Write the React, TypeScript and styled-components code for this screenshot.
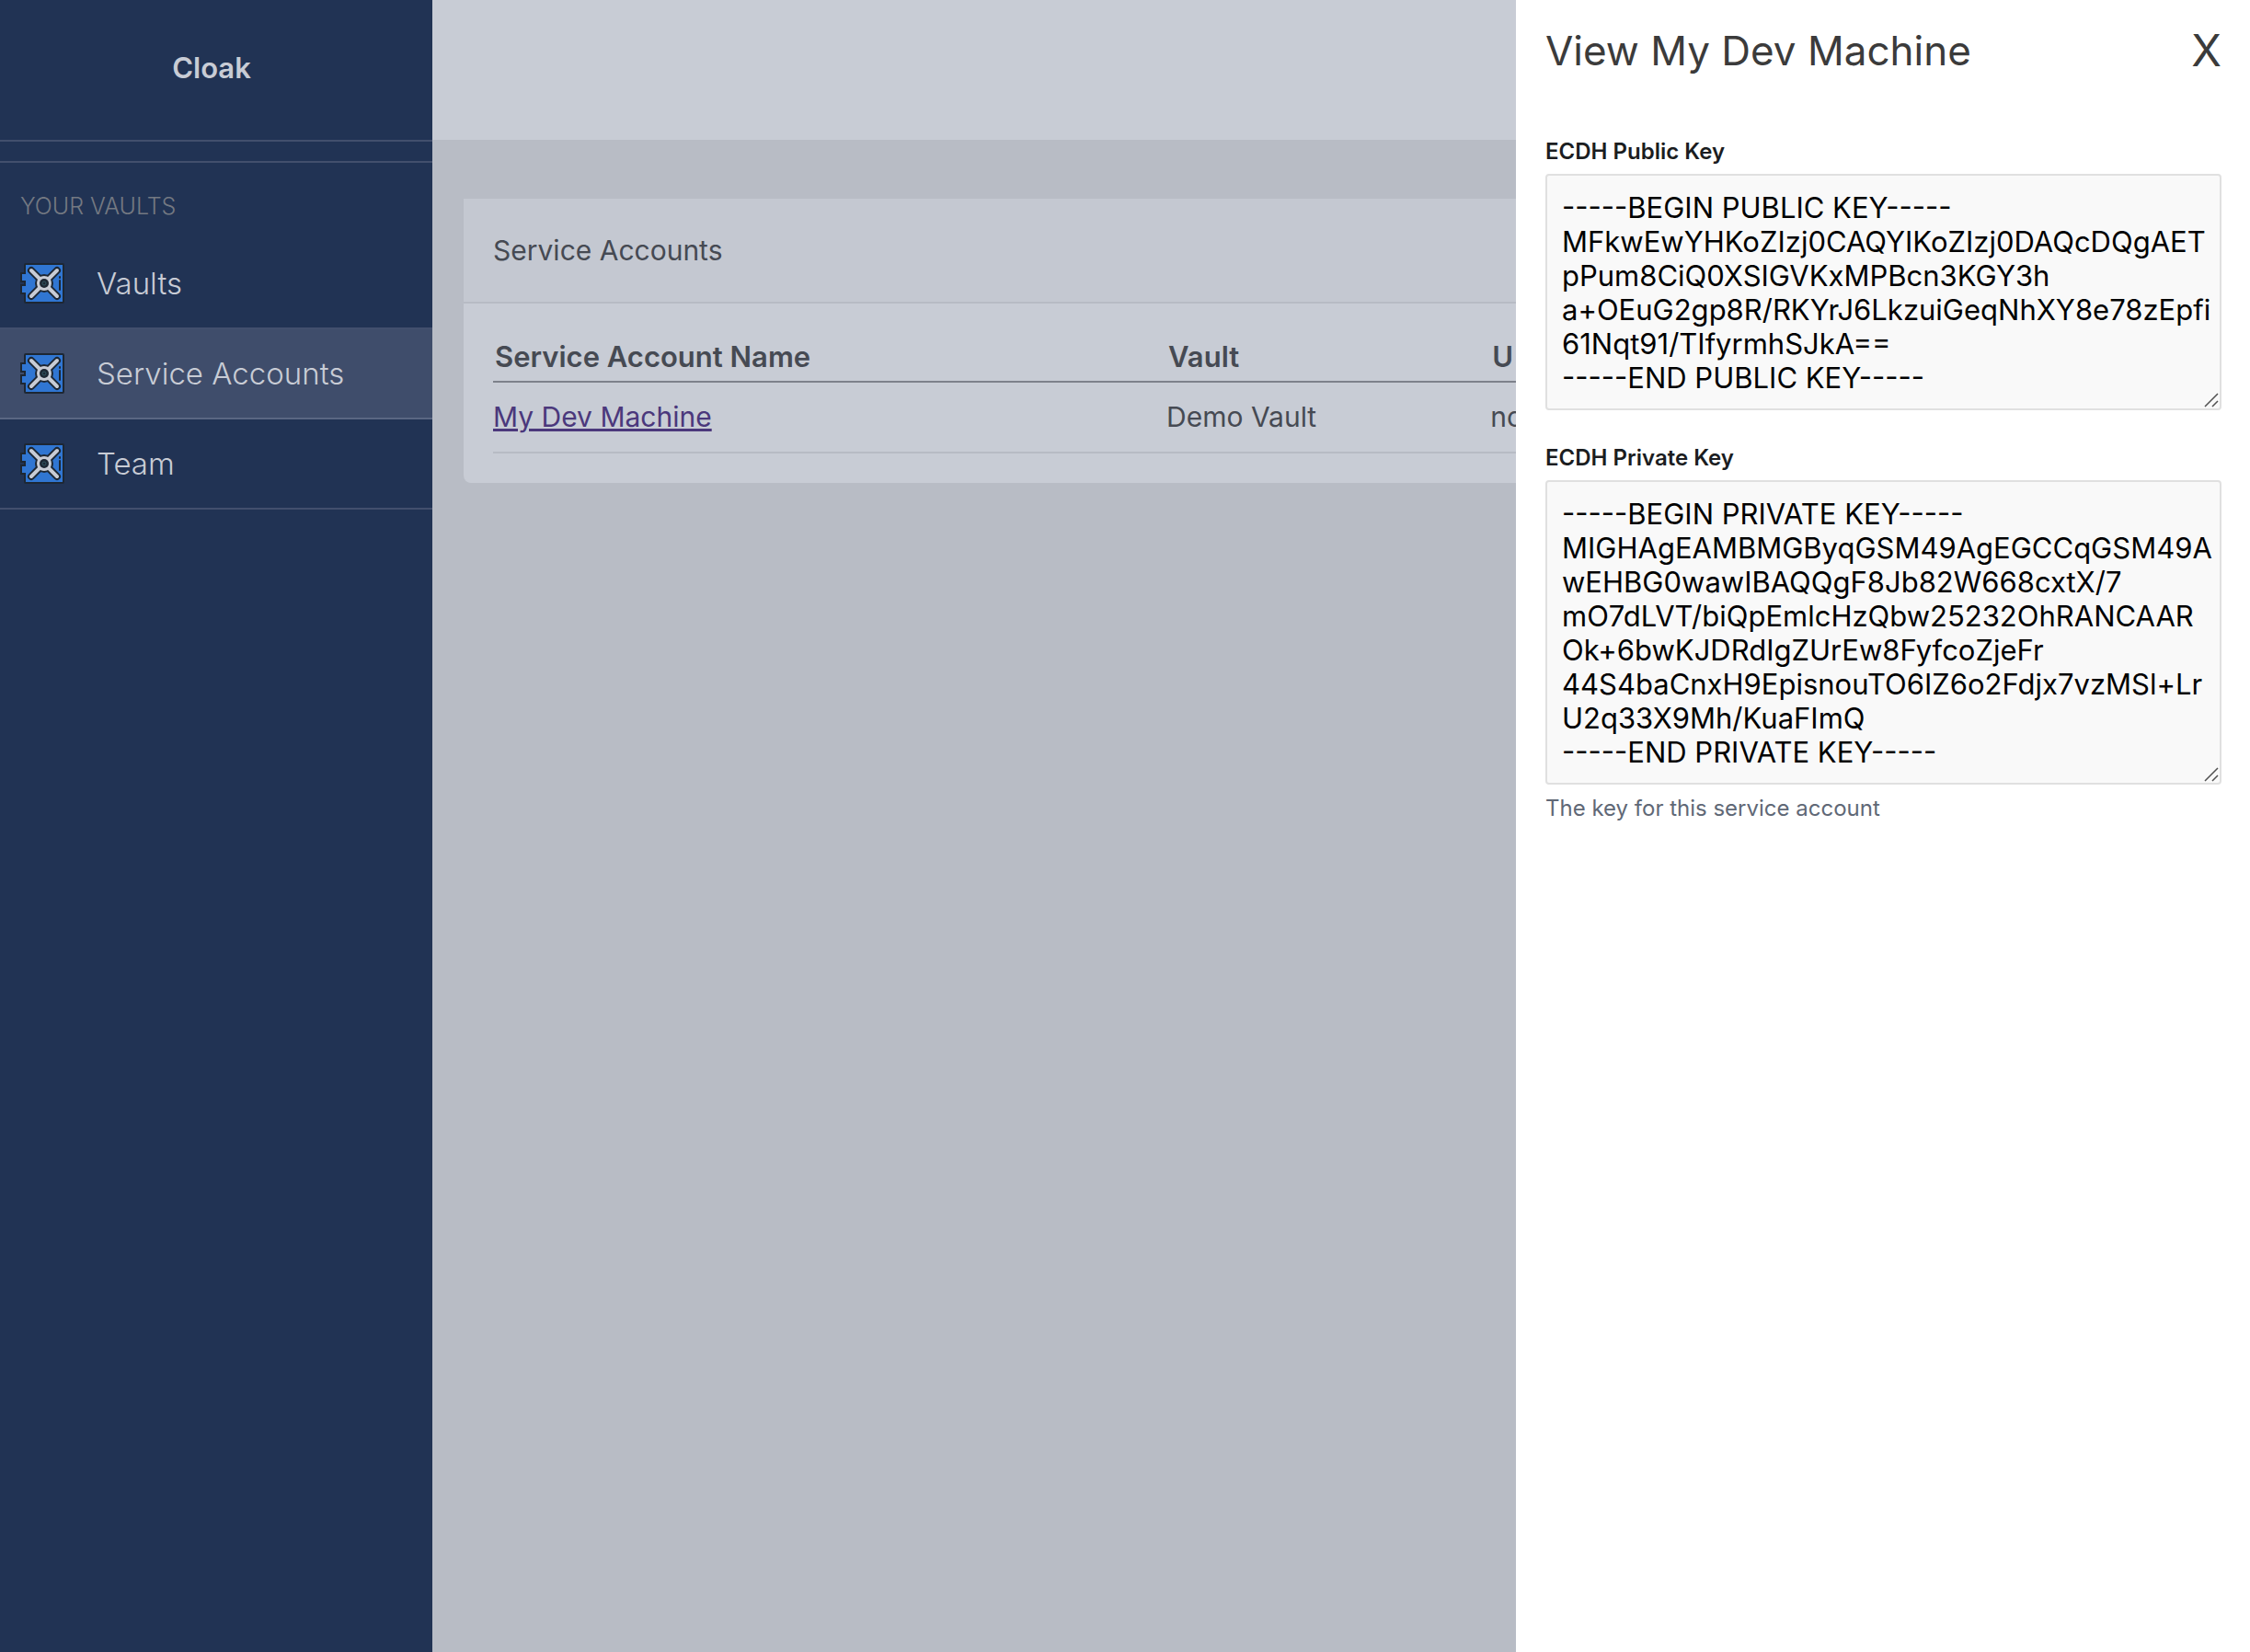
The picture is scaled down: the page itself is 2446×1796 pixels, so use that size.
import React from "react";
import styled, { createGlobalStyle } from "styled-components";

const GlobalStyle = createGlobalStyle`
  *, *::before, *::after { box-sizing: border-box; }
  body {
    margin: 0;
    font-family: Inter, "Liberation Sans", sans-serif;
    font-size: 30px;
    line-height: 40px;
    color: #464a53;
    background: #b8bcc5;
  }
`;

const Page = styled.div`
  display: grid;
  grid-template-columns: 470px minmax(0, 1fr);
  min-height: 100vh;
`;

const Sidebar = styled.aside`
  background: #213354;
  color: #c8ccd5;
`;

const Brand = styled.div`
  display: flex;
  align-items: center;
  justify-content: center;
  height: 154px;
  padding-bottom: 4px;
  padding-right: 10px;
  border-bottom: 2px solid #424f6d;
  font-size: 31px;
  font-weight: 600;
`;

const Nav = styled.nav`
  margin-top: 21px;
  border-top: 2px solid #424f6d;
`;

const NavHeading = styled.h2`
  margin: 0;
  padding: 31px 22px 20px;
  font-size: 25px;
  line-height: 32px;
  font-weight: 300;
  color: #747982;
  text-transform: uppercase;
`;

const NavItem = styled.a<{ $active?: boolean }>`
  display: flex;
  align-items: center;
  gap: 33px;
  height: 98px;
  padding: 0 22px;
  font-size: 33px;
  font-weight: 300;
  color: inherit;
  text-decoration: none;
  background: ${(p) => (p.$active ? "#3f4d6b" : "transparent")};
  border-bottom: 2px solid ${(p) => (p.$active ? "#5a6782" : "#424f6d")};
`;

const Main = styled.main`
  min-width: 0;
`;

const TopBar = styled.header`
  height: 152px;
  background: #c8ccd5;
`;

const Card = styled.section`
  margin: 64px 34px;
  background: #c8ccd5;
  border-radius: 0 0 8px 8px;
`;

const CardTitle = styled.h1`
  margin: 0;
  padding: 36px 32px;
  font-size: 30px;
  line-height: 40px;
  font-weight: 400;
  background: #c4c8d1;
  border-bottom: 2px solid #b7bbc4;
`;

const CardBody = styled.div`
  padding: 32px;
`;

const Table = styled.table`
  width: 100%;
  border-collapse: collapse;
  table-layout: fixed;
  text-align: left;

  th {
    padding: 6px 2px;
    font-size: 31px;
    font-weight: 600;
    border-bottom: 2px solid #7d818b;
  }
  td {
    padding: 17px 0 18px;
    border-bottom: 2px solid #b7bbc4;
  }
`;

const AccountLink = styled.a`
  color: #4b387c;
  text-decoration: underline;
`;

const Drawer = styled.aside`
  position: fixed;
  top: 0;
  right: 0;
  bottom: 0;
  width: 798px;
  padding: 32px 31px 32px 32px;
  background: #fff;
  color: #1b1d21;
`;

const DrawerHeader = styled.div`
  display: flex;
  align-items: center;
  justify-content: space-between;
  height: 46px;
  margin-bottom: 69px;
`;

const DrawerTitle = styled.h2`
  margin: 0;
  font-size: 44px;
  line-height: 46px;
  font-weight: 400;
  color: #3b3b3b;
`;

const CloseButton = styled.button`
  padding: 0;
  border: 0;
  background: none;
  font: inherit;
  font-size: 48px;
  line-height: 46px;
  color: #3b3b3b;
`;

const Field = styled.div`
  display: flex;
  flex-direction: column;
  margin-bottom: 34px;
`;

const Label = styled.label`
  margin-bottom: 6px;
  font-size: 24px;
  line-height: 36px;
  font-weight: 600;
`;

const KeyBoxFrame = styled.div`
  position: relative;
`;

const KeyBox = styled.textarea`
  display: block;
  width: 100%;
  padding: 16px 8px 15px 16px;
  border: 2px solid #e0e0e0;
  border-radius: 4px;
  background: #f9f9f9;
  color: #000;
  font: inherit;
  font-size: 31px;
  line-height: 37px;
  white-space: pre;
  overflow: hidden;
  resize: vertical;

  &::-webkit-resizer {
    display: none;
  }
`;

const Grip = styled.svg`
  position: absolute;
  right: 3px;
  bottom: 3px;
  width: 16px;
  height: 16px;
  pointer-events: none;
`;

const Hint = styled.p`
  margin: 8px 0 0;
  font-size: 24px;
  line-height: 36px;
  color: #606876;
`;

function VaultIcon() {
  return (
    <svg width="50" height="48" viewBox="0 0 50 48" aria-hidden="true">
      <path
        d="M6 3h40a1 1 0 0 1 1 1v40a1 1 0 0 1-1 1H6a1 1 0 0 1-1-1v-9H1v-9h4v-4H1v-9h4V4a1 1 0 0 1 1-1z"
        fill="#3076d2"
        stroke="#1d2733"
        strokeWidth="2"
      />
      <path d="M12 10l28 28M40 10L12 38" stroke="#1d2733" strokeWidth="8" strokeLinecap="round" />
      <circle cx="26" cy="24" r="10" fill="#1d2733" />
      <path d="M12 10l28 28M40 10L12 38" stroke="#c8ccd5" strokeWidth="4" strokeLinecap="round" />
      <circle cx="26" cy="24" r="8" fill="#c8ccd5" />
      <circle cx="26" cy="24" r="5" fill="#1d2733" />
      <circle cx="26" cy="24" r="2" fill="none" stroke="#2f5560" />
      <path d="M43 21v10M43 17v1" stroke="#1d2733" strokeWidth="2" strokeLinecap="round" />
    </svg>
  );
}

interface KeyFieldProps {
  id: string;
  label: string;
  value: string;
  hint?: string;
}

function KeyField({ id, label, value, hint }: KeyFieldProps) {
  return (
    <Field>
      <Label htmlFor={id}>{label}</Label>
      <KeyBoxFrame>
        <KeyBox id={id} rows={value.split("\n").length} readOnly value={value} />
        <Grip viewBox="0 0 16 16" aria-hidden="true">
          <path d="M1 15L15 1M9 15l6-6" stroke="#505050" strokeWidth="1.5" />
        </Grip>
      </KeyBoxFrame>
      {hint && <Hint>{hint}</Hint>}
    </Field>
  );
}

const navItems = ["Vaults", "Service Accounts", "Team"];

const publicKey = `-----BEGIN PUBLIC KEY-----
MFkwEwYHKoZIzj0CAQYIKoZIzj0DAQcDQgAET
pPum8CiQ0XSIGVKxMPBcn3KGY3h
a+OEuG2gp8R/RKYrJ6LkzuiGeqNhXY8e78zEpfi
61Nqt91/TIfyrmhSJkA==
-----END PUBLIC KEY-----`;

const privateKey = `-----BEGIN PRIVATE KEY-----
MIGHAgEAMBMGByqGSM49AgEGCCqGSM49A
wEHBG0wawIBAQQgF8Jb82W668cxtX/7
mO7dLVT/biQpEmlcHzQbw25232OhRANCAAR
Ok+6bwKJDRdIgZUrEw8FyfcoZjeFr
44S4baCnxH9EpisnouTO6IZ6o2Fdjx7vzMSl+Lr
U2q33X9Mh/KuaFImQ
-----END PRIVATE KEY-----`;

export default function App() {
  return (
    <>
      <GlobalStyle />
      <Page>
        <Sidebar>
          <Brand>Cloak</Brand>
          <Nav>
            <NavHeading>Your Vaults</NavHeading>
            {navItems.map((name) => (
              <NavItem key={name} href="#" $active={name === "Service Accounts"}>
                <VaultIcon />
                {name}
              </NavItem>
            ))}
          </Nav>
        </Sidebar>
        <Main>
          <TopBar />
          <Card>
            <CardTitle>Service Accounts</CardTitle>
            <CardBody>
              <Table>
                <colgroup>
                  <col style={{ width: "39.7%" }} />
                  <col style={{ width: "19.1%" }} />
                  <col />
                </colgroup>
                <thead>
                  <tr>
                    <th>Service Account Name</th>
                    <th>Vault</th>
                    <th>U</th>
                  </tr>
                </thead>
                <tbody>
                  <tr>
                    <td>
                      <AccountLink href="#">My Dev Machine</AccountLink>
                    </td>
                    <td>Demo Vault</td>
                    <td>no</td>
                  </tr>
                </tbody>
              </Table>
            </CardBody>
          </Card>
        </Main>
      </Page>
      <Drawer>
        <DrawerHeader>
          <DrawerTitle>View My Dev Machine</DrawerTitle>
          <CloseButton type="button">X</CloseButton>
        </DrawerHeader>
        <KeyField id="public-key" label="ECDH Public Key" value={publicKey} />
        <KeyField
          id="private-key"
          label="ECDH Private Key"
          value={privateKey}
          hint="The key for this service account"
        />
      </Drawer>
    </>
  );
}
